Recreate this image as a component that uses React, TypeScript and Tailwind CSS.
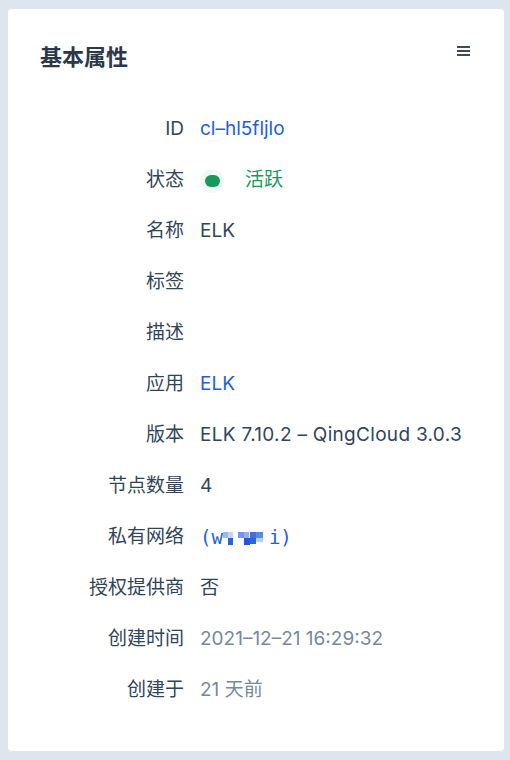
import React from 'react';

const font = { fontFamily: 'Inter, "Noto Sans CJK SC", sans-serif' };

function Redacted() {
  // mosaic blur over part of the VPC name
  return (
    <svg width="46" height="20" viewBox="0 0 46 20">
      <rect x="0" y="4" width="5" height="6" fill="#9bb8f0" />
      <rect x="5" y="4" width="5" height="6" fill="#c3d4f6" />
      <rect x="5" y="10" width="5" height="7" fill="#2a63dc" />
      <rect x="15" y="4" width="6" height="6" fill="#6f97ea" />
      <rect x="21" y="4" width="5" height="6" fill="#8eaeee" />
      <rect x="21" y="10" width="6" height="7" fill="#1f58d8" />
      <rect x="27" y="4" width="6" height="6" fill="#3b70e0" />
      <rect x="27" y="10" width="6" height="6" fill="#2d63dc" />
      <rect x="33" y="4" width="7" height="6" fill="#5a88e6" />
      <rect x="33" y="10" width="7" height="4" fill="#b9cdf5" />
    </svg>
  );
}

function Row(props: { label: string; children: React.ReactNode }) {
  return (
    <div className="flex h-[51px] items-center">
      <div className="w-[144px] shrink-0 text-right text-[#324558]">{props.label}</div>
      <div className="ml-4 flex items-center">{props.children}</div>
    </div>
  );
}

export default function App() {
  return (
    <div style={font} className="min-h-[760px] bg-[#dde6ee] pl-2 pr-[6px] pt-[9px] pb-[9px]">
      <div className="rounded-[4px] bg-white pb-[35px] pl-8 pr-[34px] pt-8">
        <div className="flex items-start justify-between">
          <div className="text-[22px] font-semibold leading-8 text-[#2b3848]">基本属性</div>
          <div className="mt-[4px] flex w-[13px] flex-col gap-[2px] pt-[1px]">
            <div className="h-[2px] bg-[#3f4a5a]" />
            <div className="h-[2px] bg-[#3f4a5a]" />
            <div className="h-[2px] bg-[#3f4a5a]" />
          </div>
        </div>

        <div className="mt-[31px] text-[19px]">
          <Row label="ID">
            <span className="text-[#1d5fdc]">cl–hl5fljlo</span>
          </Row>
          <Row label="状态">
            <span className="flex h-6 w-6 items-center justify-center rounded-full bg-[#effaf6]">
              <span className="h-[12px] w-[15px] rounded-full bg-[#17995c]" />
            </span>
            <span className="ml-[21px] text-[#17995c]">活跃</span>
          </Row>
          <Row label="名称">
            <span className="text-[#324558]">ELK</span>
          </Row>
          <Row label="标签">
            <span />
          </Row>
          <Row label="描述">
            <span />
          </Row>
          <Row label="应用">
            <span className="text-[#1d5fdc]">ELK</span>
          </Row>
          <Row label="版本">
            <span className="tracking-[0.3px] text-[#324558]">ELK 7.10.2 – QingCloud 3.0.3</span>
          </Row>
          <Row label="节点数量">
            <span className="text-[#324558]">4</span>
          </Row>
          <Row label="私有网络">
            <span
              className="flex items-center text-[#1d5fdc]"
              style={{ fontFamily: '"DejaVu Sans Mono", monospace' }}
            >
              <span>(w</span>
              <Redacted />
              <span>i)</span>
            </span>
          </Row>
          <Row label="授权提供商">
            <span className="text-[#324558]">否</span>
          </Row>
          <Row label="创建时间">
            <span className="text-[#79879c]">2021–12–21 16:29:32</span>
          </Row>
          <Row label="创建于">
            <span className="text-[#79879c]">21 天前</span>
          </Row>
        </div>
      </div>
    </div>
  );
}
